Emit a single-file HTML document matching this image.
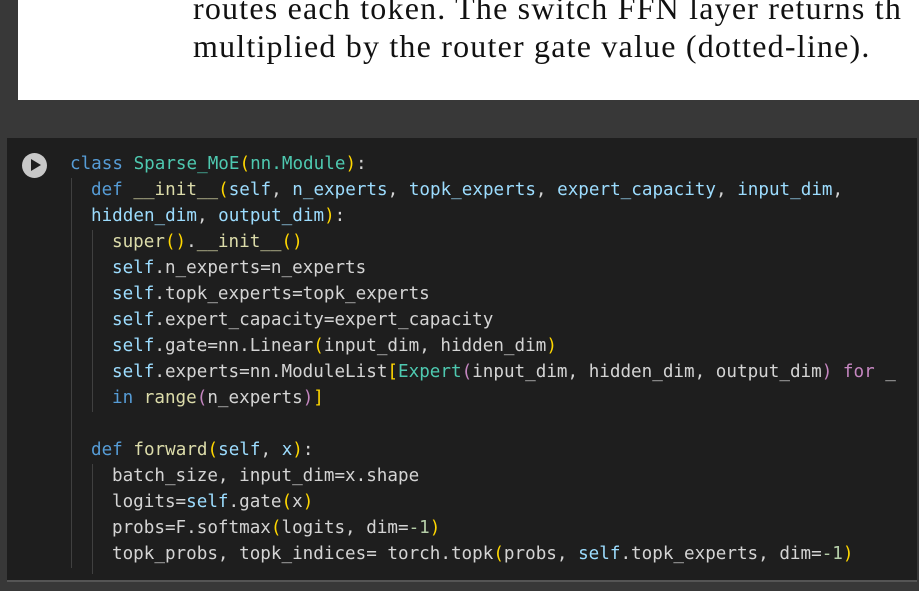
<!DOCTYPE html>
<html><head><style>
body{margin:0;width:919px;height:591px;background:#383838;position:relative;overflow:hidden;}
.paper{position:absolute;left:18px;top:0;width:901px;height:100px;background:#fff;}
.serif{position:absolute;left:193px;font-family:"Liberation Serif",serif;font-size:32px;color:#111;white-space:nowrap;letter-spacing:1.2px;}
.cell{position:absolute;left:7px;top:138px;width:910px;height:442px;background:#1e1e1e;border-bottom:2px solid #555;}
.play{position:absolute;left:22px;top:153px;width:25px;height:25px;border-radius:50%;background:#c8c8c8;}
.play:after{content:"";position:absolute;left:9px;top:6px;border-left:10px solid #1e1e1e;border-top:6.5px solid transparent;border-bottom:6.5px solid transparent;}
.ln{position:absolute;font-family:"DejaVu Sans Mono","Liberation Mono",monospace;font-size:17.6px;color:#d4d4d4;white-space:pre;line-height:26px;}
.g{position:absolute;width:1px;background:#404040;}
.k{color:#569cd6}.c{color:#4ec9b0}.y{color:#ffd700}.p{color:#9cdcfe}.f{color:#dcdcaa}.m{color:#c586c0}.n{color:#b5cea8}
</style></head><body>
<div class="paper"></div>
<div class="serif" style="top:-10px">routes each token. The switch FFN layer returns th</div>
<div class="serif" style="top:28px">multiplied by the router gate value (dotted-line).</div>
<div class="cell"></div>
<div class="play"></div>
<div class="g" style="left:71px;top:178px;height:390px"></div>
<div class="g" style="left:92px;top:230px;height:182px"></div>
<div class="g" style="left:92px;top:464px;height:110px"></div>
<div class="ln" style="left:70px;top:151px"><span class="k">class</span> <span class="c">Sparse_MoE</span><span class="y">(</span><span class="c">nn.Module</span><span class="y">)</span>:</div>
<div class="ln" style="left:91px;top:177px"><span class="k">def</span> <span class="f">__init__</span><span class="y">(</span><span class="p">self</span>, <span class="p">n_experts</span>, <span class="p">topk_experts</span>, <span class="p">expert_capacity</span>, <span class="p">input_dim</span>,</div>
<div class="ln" style="left:91px;top:203px"><span class="p">hidden_dim</span>, <span class="p">output_dim</span><span class="y">)</span>:</div>
<div class="ln" style="left:112px;top:229px"><span class="f">super</span><span class="y">()</span>.<span class="f">__init__</span><span class="y">()</span></div>
<div class="ln" style="left:112px;top:255px"><span class="p">self</span>.n_experts=n_experts</div>
<div class="ln" style="left:112px;top:281px"><span class="p">self</span>.topk_experts=topk_experts</div>
<div class="ln" style="left:112px;top:307px"><span class="p">self</span>.expert_capacity=expert_capacity</div>
<div class="ln" style="left:112px;top:333px"><span class="p">self</span>.gate=nn.Linear<span class="y">(</span>input_dim, hidden_dim<span class="y">)</span></div>
<div class="ln" style="left:112px;top:359px"><span class="p">self</span>.experts=nn.ModuleList<span class="y">[</span><span class="c">Expert</span><span class="m">(</span>input_dim, hidden_dim, output_dim<span class="m">)</span> <span class="m">for</span> _</div>
<div class="ln" style="left:112px;top:385px"><span class="k">in</span> <span class="f">range</span><span class="m">(</span>n_experts<span class="m">)</span><span class="y">]</span></div>
<div class="ln" style="left:91px;top:437px"><span class="k">def</span> <span class="f">forward</span><span class="y">(</span><span class="p">self</span>, <span class="p">x</span><span class="y">)</span>:</div>
<div class="ln" style="left:112px;top:463px">batch_size, input_dim=x.shape</div>
<div class="ln" style="left:112px;top:489px">logits=<span class="p">self</span>.gate<span class="y">(</span>x<span class="y">)</span></div>
<div class="ln" style="left:112px;top:515px">probs=F.softmax<span class="y">(</span>logits, dim=<span class="n">-1</span><span class="y">)</span></div>
<div class="ln" style="left:112px;top:541px">topk_probs, topk_indices= torch.topk<span class="y">(</span>probs, <span class="p">self</span>.topk_experts, dim=<span class="n">-1</span><span class="y">)</span></div>
</body></html>
